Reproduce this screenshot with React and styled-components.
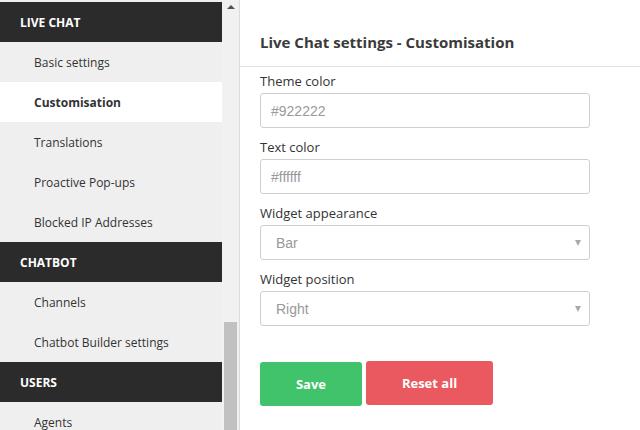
import React from "react";
import styled, { createGlobalStyle } from "styled-components";

const Global = createGlobalStyle`
  html, body { margin: 0; padding: 0; background: #fff; }
  body { font-family: "Open Sans", "Liberation Sans", sans-serif; }
  * { box-sizing: border-box; }
`;

const Page = styled.div`
  display: flex;
  width: 640px;
  height: 430px;
  overflow: hidden;
`;

const Side = styled.div`
  display: flex;
  width: 240px;
  height: 430px;
  flex-shrink: 0;
  border-right: 1px solid #dcdcdc;
  background: #efefef;
`;

const Nav = styled.nav`
  width: 222px;
  padding-top: 2px;
  display: flex;
  flex-direction: column;
`;

const Header = styled.div`
  height: 40px;
  flex-shrink: 0;
  background: #2b2b2b;
  color: #fff;
  font-weight: 700;
  font-size: 12px;
  padding-left: 20px;
  display: flex;
  align-items: center;
`;

const Item = styled.div`
  height: 40px;
  flex-shrink: 0;
  padding-left: 34px;
  display: flex;
  align-items: center;
  font-size: 12px;
  color: #333;
  background: ${(p) => (p.$active ? "#fff" : "transparent")};
  font-weight: ${(p) => (p.$active ? 700 : 400)};
`;

const Scrollbar = styled.div`
  width: 17px;
  background: #f1f1f1;
  display: flex;
  flex-direction: column;
  align-items: center;
`;

const Arrow = styled.div`
  margin-top: 5px;
  width: 0;
  height: 0;
  border-left: 4px solid transparent;
  border-right: 4px solid transparent;
  border-bottom: 4px solid #505050;
`;

const Thumb = styled.div`
  margin-top: 313px;
  width: 13px;
  flex: 1;
  background: #c1c1c1;
`;

const Main = styled.main`
  flex: 1;
  display: flex;
  flex-direction: column;
`;

const TitleBar = styled.div`
  height: 67px;
  padding: 32px 0 0 20px;
  border-bottom: 1px solid #e2e2e2;
`;

const Title = styled.h1`
  margin: 0;
  font-size: 15px;
  line-height: 20px;
  font-weight: 700;
  color: #3a3a3a;
`;

const Form = styled.div`
  padding: 4px 0 0 20px;
  display: flex;
  flex-direction: column;
`;

const Field = styled.div`
  display: flex;
  flex-direction: column;
  margin-bottom: 9px;
`;

const Label = styled.label`
  font-size: 13px;
  line-height: 20px;
  color: #333;
  margin-bottom: 2px;
`;

const Input = styled.div`
  width: 330px;
  height: 35px;
  border: 1px solid #cfcfcf;
  border-radius: 3px;
  display: flex;
  align-items: center;
  justify-content: space-between;
  padding: 0 7px 0 ${(p) => (p.$select ? "15px" : "10px")};
  font-family: "Liberation Sans", Arial, sans-serif;
  font-size: 14px;
  color: #999;
`;

const Caret = styled.span`
  width: 0;
  height: 0;
  border-left: 3px solid transparent;
  border-right: 3px solid transparent;
  border-top: 6px solid #aaa;
  margin-right: 1px;
`;

const Buttons = styled.div`
  display: flex;
  gap: 4px;
  align-items: flex-start;
  margin-top: 26px;
`;

const Button = styled.button`
  border: none;
  border-radius: 3px;
  height: 44px;
  width: ${(p) => p.$w}px;
  margin-top: ${(p) => p.$mt || 0}px;
  background: ${(p) => p.$bg};
  color: #fff;
  font-family: "Open Sans", sans-serif;
  font-weight: 700;
  font-size: 13px;
  cursor: pointer;
`;

export default function App() {
  return (
    <>
      <Global />
      <Page>
        <Side>
          <Nav>
            <Header>LIVE CHAT</Header>
            <Item>Basic settings</Item>
            <Item $active>Customisation</Item>
            <Item>Translations</Item>
            <Item>Proactive Pop-ups</Item>
            <Item>Blocked IP Addresses</Item>
            <Header>CHATBOT</Header>
            <Item>Channels</Item>
            <Item>Chatbot Builder settings</Item>
            <Header>USERS</Header>
            <Item>Agents</Item>
          </Nav>
          <Scrollbar>
            <Arrow />
            <Thumb />
          </Scrollbar>
        </Side>
        <Main>
          <TitleBar>
            <Title>Live Chat settings - Customisation</Title>
          </TitleBar>
          <Form>
            <Field>
              <Label>Theme color</Label>
              <Input>#922222</Input>
            </Field>
            <Field>
              <Label>Text color</Label>
              <Input>#ffffff</Input>
            </Field>
            <Field>
              <Label>Widget appearance</Label>
              <Input $select>
                Bar<Caret />
              </Input>
            </Field>
            <Field>
              <Label>Widget position</Label>
              <Input $select>
                Right<Caret />
              </Input>
            </Field>
            <Buttons>
              <Button $w={102} $mt={1} $bg="#41c36b">Save</Button>
              <Button $w={127} $bg="#ea5860">Reset all</Button>
            </Buttons>
          </Form>
        </Main>
      </Page>
    </>
  );
}
